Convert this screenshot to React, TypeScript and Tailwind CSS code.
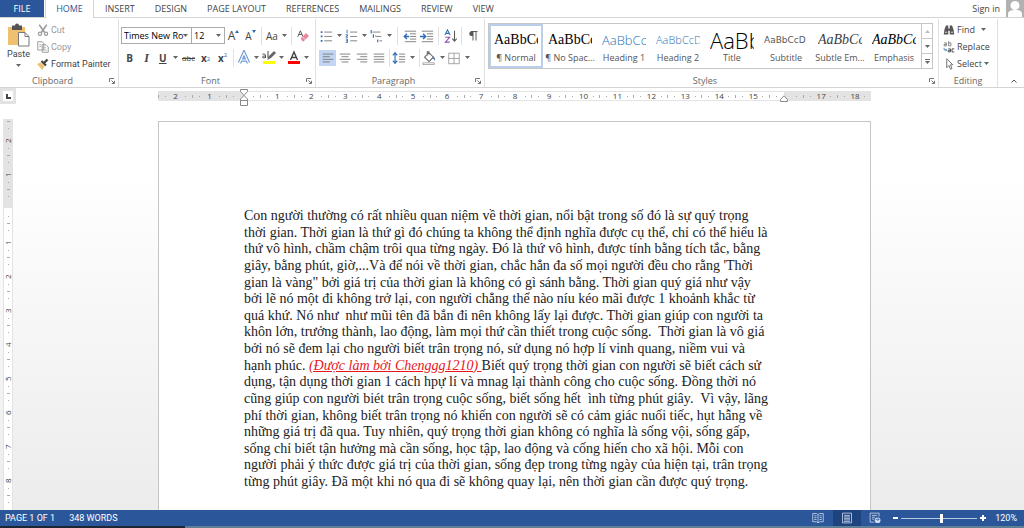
import type { ReactNode } from "react";

const tabs = ["INSERT", "DESIGN", "PAGE LAYOUT", "REFERENCES", "MAILINGS", "REVIEW", "VIEW"];

const styleItems = [
  { name: "¶ Normal", sample: "AaBbCc", look: "font-['Liberation_Serif',serif] text-[14px] text-black" },
  { name: "¶ No Spac...", sample: "AaBbCc", look: "font-['Liberation_Serif',serif] text-[14px] text-black" },
  { name: "Heading 1", sample: "AaBbCc", look: "font-light text-[13px] text-[#2e74b5]" },
  { name: "Heading 2", sample: "AaBbCcD", look: "font-light text-[11px] text-[#2e74b5]" },
  { name: "Title", sample: "AaBb", look: "font-light text-[22px] text-black" },
  { name: "Subtitle", sample: "AaBbCcD", look: "font-['DejaVu_Sans',sans-serif] text-[9px] text-[#5a5a5a]" },
  { name: "Subtle Em...", sample: "AaBbCc", look: "font-['Liberation_Serif',serif] text-[14px] italic text-[#404040]" },
  { name: "Emphasis", sample: "AaBbCc", look: "font-['Liberation_Serif',serif] text-[14px] italic text-black" },
];

const linesBefore = [
  "Con người thường có rất nhiều quan niệm về thời gian, nổi bật trong số đó là sự quý trọng",
  "thời gian. Thời gian là thứ gì đó chúng ta không thể định nghĩa được cụ thể, chỉ có thể hiểu là",
  "thứ vô hình, chầm chậm trôi qua từng ngày. Đó là thứ vô hình, được tính bằng tích tắc, bằng",
  "giây, bằng phút, giờ,...Và để nói về thời gian, chắc hẳn đa số mọi người đều cho rằng 'Thời",
  "gian là vàng\" bởi giá trị của thời gian là không có gì sánh bằng. Thời gian quý giá như vậy",
  "bởi lẽ nó một đi không trở lại, con người chẳng thể nào níu kéo mãi được 1 khoảnh khắc từ",
  "quá khứ. Nó như  như mũi tên đã bắn đi nên không lấy lại được. Thời gian giúp con người ta",
  "khôn lớn, trưởng thành, lao động, làm mọi thứ cần thiết trong cuộc sống.  Thời gian là vô giá",
  "bởi nó sẽ đem lại cho người biết trân trọng nó, sử dụng nó hợp lí vinh quang, niềm vui và",
];

const linesAfter = [
  "dụng, tận dụng thời gian 1 cách hpự lí và mnag lại thành công cho cuộc sống. Đồng thời nó",
  "cũng giúp con người biét trân trọng cuộc sống, biết sống hết  ình từng phút giây.  Vì vậy, lãng",
  "phí thời gian, không biết trân trọng nó khiến con người sẽ có cảm giác nuối tiếc, hụt hẫng về",
  "những giá trị đã qua. Tuy nhiên, quý trọng thời gian không có nghĩa là sống vội, sống gấp,",
  "sống chỉ biết tận hưởng mà cần sống, học tập, lao động và cống hiến cho xã hội. Mỗi con",
  "người phải ý thức được giá trị của thời gian, sống đẹp trong từng ngày của hiện tại, trân trọng",
  "từng phút giây. Đã một khi nó qua đi sẽ không quay lại, nên thời gian cần được quý trọng.",
];

function Icon({ children, className = "size-4" }: { children: ReactNode; className?: string }) {
  return (
    <svg viewBox="0 0 16 16" fill="none" className={`shrink-0 ${className}`} aria-hidden="true">
      {children}
    </svg>
  );
}

function Caret() {
  return (
    <svg viewBox="0 0 5 3" className="h-[3px] w-[5px] shrink-0 fill-[#666]" aria-hidden="true">
      <path d="M0 0h5L2.5 3z" />
    </svg>
  );
}

function Tool({ label, wide, active, children }: { label: string; wide?: boolean; active?: boolean; children: ReactNode }) {
  return (
    <button
      aria-label={label}
      className={`flex h-4 shrink-0 items-center ${wide ? "w-[25px] justify-between pr-[2px]" : "w-[17px] justify-center"} ${active ? "bg-[#c2d5f2]" : ""}`}
    >
      {children}
      {wide && <Caret />}
    </button>
  );
}

function Divider({ roomy }: { roomy?: boolean }) {
  return <span className={`h-[18px] w-px shrink-0 bg-[#e1e1e1] ${roomy ? "mx-[3px]" : "mx-[2px]"}`} />;
}

function Group({ title, launcher, className, children }: { title: string; launcher?: boolean; className: string; children: ReactNode }) {
  return (
    <section aria-label={title} className={`flex flex-col border-r border-[#e1e1e1] ${className}`}>
      <div className="h-14">{children}</div>
      <div className="flex h-3 items-center">
        <span className="flex-1 text-center text-[#666]">{title}</span>
        {launcher && (
          <button aria-label={`${title} settings`} className="mr-[3px] ml-1">
            <svg viewBox="0 0 6 6" fill="none" stroke="#777" className="size-[6px]">
              <path d="M.5 4V.5H5M2.5 2.5l3 3M5.500 2.800V5.500H2.800" />
            </svg>
          </button>
        )}
      </div>
    </section>
  );
}

// text lines of the alignment and list icons
function Rows({ d }: { d: string }) {
  return <path d={d} stroke="#777" />;
}

function ClipboardGroup() {
  return (
    <Group title="Clipboard" launcher className="w-[119px]">
      <div className="flex font-['Roboto',sans-serif]">
        <button className="flex w-[37px] flex-col items-center pt-1">
          <svg viewBox="0 0 24 24" fill="none" className="size-6" aria-hidden="true">
            <path d="M1 4h17v18H1z" fill="#eec06f" />
            <path d="M5 2.500h3a2 2 0 0 1 4 0h3V7H5z" fill="#555" />
            <path d="M11.500 9.500h6.500l4 4v9.500h-10.500z" fill="#fff" stroke="#777" />
            <path d="M18 9.500v4h4" stroke="#777" />
          </svg>
          <span className="mt-px leading-3">Paste</span>
          <span className="mt-1">
            <Caret />
          </span>
        </button>
        <div className="flex flex-col pt-[2px]">
          <button className="flex h-[17px] items-center gap-[2px] text-[#999]">
            <Icon className="size-3">
              <path d="M3 1l7 10M13 1L6 11" stroke="#999" strokeWidth="2" />
              <circle cx="4" cy="13" r="2.200" stroke="#999" strokeWidth="1.500" />
              <circle cx="12" cy="13" r="2.200" stroke="#999" strokeWidth="1.500" />
            </Icon>
            Cut
          </button>
          <button className="flex h-[17px] items-center gap-[2px] text-[#999]">
            <Icon className="size-3">
              <path d="M1 1h6l2 2v9H1zM7 5h5l3 3v7H7z" fill="#fff" stroke="#999" strokeWidth="1.300" />
              <path d="M3 5h3M3 7.500h3M9 9h3M9 12h4" stroke="#999" />
            </Icon>
            Copy
          </button>
          <button className="flex h-[17px] items-center gap-[2px]">
            <Icon className="size-3">
              <path d="M0 8l5-2 5 5-3 5z" fill="#eec06f" />
              <path d="M6 4l6 6M9 7l5-5" stroke="#444" strokeWidth="3" />
            </Icon>
            Format Painter
          </button>
        </div>
      </div>
    </Group>
  );
}

function Combo({ label, value, className }: { label: string; value: string; className: string }) {
  return (
    <span className={`relative flex h-[17px] shrink-0 items-center border border-[#ababab] bg-white ${className}`}>
      <select aria-label={label} className="w-full appearance-none pl-[2px] text-[9px] leading-3 text-black outline-none">
        <option>{value}</option>
      </select>
      <span className="pointer-events-none absolute right-[3px]">
        <Caret />
      </span>
    </span>
  );
}

function FontGroup() {
  return (
    <Group title="Font" launcher className="w-[197px]">
      <div className="flex h-[25px] items-center pt-2 pl-[2px]">
        <Combo label="Font name" value="Times New Ro" className="w-[71px]" />
        <Combo label="Font size" value="12" className="-ml-px w-[34px]" />
        <Tool label="Grow font">
          <span className="text-[12px] leading-4">A</span>
          <svg viewBox="0 0 4 3" className="mb-2 h-[3px] w-1 fill-[#2b6cb5]"><path d="M0 3h4L2 0z" /></svg>
        </Tool>
        <Tool label="Shrink font">
          <span className="text-[10px] leading-4">A</span>
          <svg viewBox="0 0 4 3" className="mb-2 h-[3px] w-1 fill-[#2b6cb5]"><path d="M0 0h4L2 3z" /></svg>
        </Tool>
        <Divider />
        <Tool label="Change case" wide>
          <span className="pl-[2px] text-[10px] leading-4">Aa</span>
        </Tool>
        <Divider />
        <Tool label="Clear formatting">
          <Icon className="size-3">
            <path d="M1 9l3.500-8L8 9M2.500 6h4" stroke="#555" strokeWidth="1.300" />
            <path d="M5 11l7-7 4 4-7 7H7z" fill="#e8869a" />
            <path d="M7 9l4 4" stroke="#fff" />
          </Icon>
        </Tool>
      </div>
      <div className="flex h-[23px] items-center pt-1 pl-[2px]">
        <Tool label="Bold"><b className="text-[10px] leading-4">B</b></Tool>
        <Tool label="Italic"><i className="font-['Liberation_Serif',serif] text-[12px] leading-4 font-bold">I</i></Tool>
        <Tool label="Underline" wide><b className="pl-1 text-[10px] leading-4 underline">U</b></Tool>
        <Tool label="Strikethrough"><span className="text-[8px] leading-4 line-through">abc</span></Tool>
        <Tool label="Subscript">
          <b className="text-[10px] leading-4">x</b>
          <sub className="text-[6px] leading-none text-[#2b6cb5]">2</sub>
        </Tool>
        <Tool label="Superscript">
          <b className="text-[10px] leading-4">x</b>
          <sup className="text-[6px] leading-none text-[#2b6cb5]">2</sup>
        </Tool>
        <Divider />
        <Tool label="Text effects" wide>
          <Icon className="size-4">
            <path d="M3.500 13L8 3l4.500 10M5 10h6" stroke="#6d9bd8" strokeWidth="3.500" />
            <path d="M3.500 13L8 3l4.500 10M5 10h6" stroke="#fff" strokeWidth="1.200" />
          </Icon>
        </Tool>
        <Tool label="Highlight colour" wide>
          <Icon className="size-4">
            <path d="M2 11h12v3H2z" fill="#ffff00" />
            <path d="M6 10l2-4 5-5 2 2-5 5z" fill="#666" />
            <path d="M1.500 4.500c2-1.500 3 0 3 1.500v2M4.500 6c-4-.5-4 3 0 1.500M7 1v7" stroke="#444" />
          </Icon>
        </Tool>
        <Tool label="Font colour" wide>
          <Icon className="size-4">
            <path d="M2 11h12v3H2z" fill="#f00" />
            <path d="M4.500 10L8 2l3.500 8M5.500 7.500h5" stroke="#444" strokeWidth="1.400" />
          </Icon>
        </Tool>
      </div>
    </Group>
  );
}

function ParagraphGroup() {
  return (
    <Group title="Paragraph" launcher className="w-[169px]">
      <div className="flex h-[25px] items-center pt-2 pl-[3px]">
        <Tool label="Bullets" wide>
          <Icon className="size-3.5">
            <path d="M2 3.500h2M2 8.500h2M2 13.500h2" stroke="#2b6cb5" strokeWidth="2" />
            <Rows d="M6 3.500h9M6 8.500h9M6 13.500h9" />
          </Icon>
        </Tool>
        <Tool label="Numbering" wide>
          <Icon className="size-3.5">
            <path d="M3.500 1v4M2 6.500h2v1.500H2.500v1.500H4.500M2 11.500h2v4H2M2 13.500h2" stroke="#2b6cb5" />
            <Rows d="M7 3.500h8M7 8.500h8M7 13.500h8" />
          </Icon>
        </Tool>
        <Tool label="Multilevel list" wide>
          <Icon className="size-3.5">
            <path d="M2.500 1v4M5 6v4M7 8h1M10 12v3" stroke="#2b6cb5" strokeWidth="1.300" />
            <Rows d="M4 3.500h9M8 8.500h6M12 13.500h3" />
          </Icon>
        </Tool>
        <Divider roomy />
        <Tool label="Decrease indent">
          <Icon className="size-3.5">
            <Rows d="M2 2.500h13M8 5.500h7M8 8.500h7M8 11.500h7M2 14.500h13" />
            <path d="M7 8.500H2M4.500 5.500l-3 3 3 3" stroke="#2b6cb5" strokeWidth="1.600" />
          </Icon>
        </Tool>
        <Tool label="Increase indent">
          <Icon className="size-3.5">
            <Rows d="M2 2.500h13M8 5.500h7M8 8.500h7M8 11.500h7M2 14.500h13" />
            <path d="M0 8.500h6M3.500 5.500l3 3-3 3" stroke="#2b6cb5" strokeWidth="1.600" />
          </Icon>
        </Tool>
        <Divider roomy />
        <Tool label="Sort">
          <Icon className="size-3.5">
            <path d="M1 7l3-6 3 6M2 5h4" stroke="#2b6cb5" strokeWidth="1.200" />
            <path d="M1.500 9.500h5l-5 5.500h5" stroke="#8a4fa8" strokeWidth="1.200" />
            <path d="M12 2v12M9.500 11l2.500 3 2.500-3" stroke="#555" strokeWidth="1.200" />
          </Icon>
        </Tool>
        <Divider />
        <Tool label="Show marks">
          <Icon className="size-3">
            <path d="M8 2v12M12 2v12M5 2h9" stroke="#555" strokeWidth="1.300" />
            <path d="M8 2H6a3 3 0 0 0 0 6h2z" fill="#555" />
          </Icon>
        </Tool>
      </div>
      <div className="flex h-[23px] items-center pt-1 pl-[3px]">
        <Tool label="Align left" active><Icon className="size-3.5"><Rows d="M2 3.500h12M2 6.500h8M2 9.500h12M2 12.500h8" /></Icon></Tool>
        <Tool label="Centre"><Icon className="size-3.5"><Rows d="M2 3.500h12M4 6.500h8M2 9.500h12M4 12.500h8" /></Icon></Tool>
        <Tool label="Align right"><Icon className="size-3.5"><Rows d="M2 3.500h12M6 6.500h8M2 9.500h12M6 12.500h8" /></Icon></Tool>
        <Tool label="Justify"><Icon className="size-3.5"><Rows d="M2 3.500h12M2 6.500h12M2 9.500h12M2 12.500h12" /></Icon></Tool>
        <Divider />
        <Tool label="Line spacing" wide>
          <Icon className="size-3.5">
            <path d="M3.500 2v12M1 5l2.500-3L6 5M1 11l2.500 3L6 11" stroke="#2b6cb5" strokeWidth="1.300" />
            <Rows d="M8 3.500h7M8 6.500h7M8 9.500h7M8 12.500h7" />
          </Icon>
        </Tool>
        <Divider />
        <Tool label="Shading" wide>
          <Icon className="size-3.5">
            <path d="M3 7l5-5 5 5-5 5zM6 5V1h2v3" stroke="#666" strokeWidth="1.200" />
            <path d="M13 6c2 2 2 3 1.500 5L12.500 8z" fill="#2b6cb5" />
            <path d="M1 13.500h13v2H1z" fill="#fff" stroke="#888" strokeWidth=".8" />
          </Icon>
        </Tool>
        <Tool label="Borders" wide>
          <Icon className="size-3.5">
            <path d="M2 2.500h12v12H2zM8 2.500v12M2 8.500h12" stroke="#999" />
          </Icon>
        </Tool>
      </div>
    </Group>
  );
}

function StylesGroup() {
  return (
    <Group title="Styles" launcher className="min-w-0 flex-1">
      <div className="mt-1 mr-[5px] ml-[3px] flex h-[46px] border border-[#c6c6c6]">
        {styleItems.map((item, i) => (
          <button
            key={item.name}
            className={`flex min-w-0 flex-1 flex-col items-center justify-center border-2 ${i === 0 ? "border-[#bccfea]" : "border-transparent"}`}
          >
            <span className={`flex h-6 w-[44px] items-center overflow-hidden whitespace-nowrap ${item.look}`}>
              {item.sample}
            </span>
            <span className="h-3 whitespace-nowrap text-[#555]">{item.name}</span>
          </button>
        ))}
        <div className="flex w-[11px] flex-col divide-y divide-[#c6c6c6] border-l border-[#c6c6c6]">
          <button aria-label="Previous styles" className="flex flex-1 items-center justify-center">
            <svg viewBox="0 0 5 3" className="h-[3px] w-[5px] fill-[#bbb]"><path d="M0 3h5L2.5 0z" /></svg>
          </button>
          <button aria-label="Next styles" className="flex flex-1 items-center justify-center"><Caret /></button>
          <button aria-label="More styles" className="flex flex-1 flex-col items-center justify-center gap-px">
            <span className="h-px w-[5px] bg-[#666]" />
            <Caret />
          </button>
        </div>
      </div>
    </Group>
  );
}

function EditingGroup() {
  return (
    <Group title="Editing" className="w-[59px]">
      <div className="flex flex-col items-start pt-[2px] pl-1">
        <button className="flex h-[17px] items-center gap-[2px]">
          <Icon className="size-3">
            <path d="M1 14l1-7 2-5h3v12zM9 14V2h3l2 5 1 7z" fill="#555" />
            <path d="M6 6h4v3H6z" fill="#555" />
            <path d="M2.500 11h3M10.500 11h3" stroke="#fff" />
          </Icon>
          Find
          <span className="ml-1"><Caret /></span>
        </button>
        <button className="flex h-[17px] items-center gap-[2px]">
          <Icon className="size-3">
            <path d="M1.500 2.500h3v4h-3v-2h3M7.500 0v6.500h3v-4h-3" stroke="#666" />
            <path d="M7 10.500h3v4H7v-2h3M15 10.500h-3v4h3" stroke="#444" strokeWidth="1.200" />
            <path d="M1.500 9v3H5M3.500 10.500L5 12l-1.500 1.500" stroke="#2b6cb5" />
          </Icon>
          Replace
        </button>
        <button className="flex h-[17px] items-center gap-[2px]">
          <Icon className="size-3">
            <path d="M5 1v12l3-3 2 5 2-1-2-5h3z" fill="#fff" stroke="#666" strokeWidth="1.200" />
          </Icon>
          Select
          <Caret />
        </button>
      </div>
    </Group>
  );
}

function HorizontalRuler() {
  const marks = Array.from({ length: 21 }, (_, i) => i - 2);
  return (
    <div className="relative flex h-[10px] w-[713px] items-center overflow-visible border-y border-[#e3e3e3] bg-[linear-gradient(to_right,#e3e3e3_86px,white_86px,white_626px,#e3e3e3_626px)] text-[8px] text-[#444]">
      {marks.map((n) => (
        <span key={n} className="flex h-full min-w-0 flex-1 items-center justify-between">
          <i className="h-[3px] w-px bg-[#aaa]" />
          <i className="size-px bg-[#aaa]" />
          <span className="w-2 text-center leading-none whitespace-nowrap">{n === 0 || n === 16 ? "" : Math.abs(n)}</span>
          <i className="size-px bg-[#aaa]" />
          <i className="w-0" />
        </span>
      ))}
      <svg viewBox="0 0 8 17" fill="#fff" stroke="#888" className="absolute -top-[3px] left-[82px] h-[17px] w-2" aria-hidden="true">
        <path d="M.5.5h7v2L4 6.500.5 2.500zM4 6.500l3.500 3.500v1.500h-7V10zM.5 11.500h7v5h-7z" />
      </svg>
      <svg viewBox="0 0 8 8" fill="#fff" stroke="#888" className="absolute top-[3px] left-[622px] size-2" aria-hidden="true">
        <path d="M4 .8L7.500 4.500v2h-7v-2z" />
      </svg>
    </div>
  );
}

function VerticalRuler() {
  const marks = Array.from({ length: 12 }, (_, i) => i - 2);
  return (
    <div className="ml-[3px] min-h-0 w-[10px] flex-1 overflow-hidden border-x border-[#e3e3e3] bg-[linear-gradient(to_bottom,#e3e3e3_89px,white_89px)] pt-[2px] text-[8px] text-[#444]">
      {marks.map((n) => (
        <span key={n} className="flex h-[34px] flex-col items-center justify-between">
          <i className="h-px w-[3px] bg-[#aaa]" />
          <i className="size-px bg-[#aaa]" />
          <span className="flex h-2 rotate-180 items-center leading-none [writing-mode:vertical-rl]">{n === 0 ? "" : Math.abs(n)}</span>
          <i className="size-px bg-[#aaa]" />
          <i className="h-0" />
        </span>
      ))}
    </div>
  );
}

function StatusBar() {
  return (
    <footer className="flex h-4 shrink-0 items-center bg-[#2b579a] pr-[7px] pl-[5px] font-['Roboto',sans-serif] text-white">
      <span>PAGE 1 OF 1</span>
      <span className="ml-[14px]">348 WORDS</span>
      <button aria-label="Read mode" className="ml-auto flex h-4 w-[30px] items-center justify-center">
        <Icon className="size-3">
          <path d="M1 2h5l2 1.500L10 2h5v11h-5l-2 1.500L6 13H1zM8 3.500v11M3 5h3M3 7.500h3M3 10h3M10 5h3M10 7.500h3M10 10h3" stroke="#d5e0f2" />
        </Icon>
      </button>
      <button aria-label="Print layout" className="flex h-4 w-[28px] items-center justify-center bg-[#1e4480]">
        <Icon className="size-3">
          <path d="M2 1.500h12v13H2zM4 4.500h8M4 6.500h8M4 8.500h8M4 10.500h8M4 12.500h8" stroke="#d5e0f2" />
        </Icon>
      </button>
      <button aria-label="Web layout" className="flex h-4 w-[28px] items-center justify-center">
        <Icon className="size-3">
          <path d="M7 13.500H1.500v-12h12V6M4 4.500h7M4 7h4M4 9.500h3" stroke="#d5e0f2" />
          <circle cx="11.500" cy="11" r="3.800" fill="#d5e0f2" />
          <path d="M9 10h2l1 2M12 8v2h2" stroke="#2b579a" />
        </Icon>
      </button>
      <button aria-label="Zoom out" className="flex size-3 items-center justify-center">
        <span className="h-[2px] w-[5px] bg-white" />
      </button>
      <input
        type="range"
        aria-label="Zoom"
        min={0}
        max={100}
        defaultValue={53}
        className="h-3 w-[76px] appearance-none bg-[linear-gradient(#b8c9e4,#b8c9e4)] bg-[length:100%_1px] bg-center bg-no-repeat [&::-webkit-slider-thumb]:h-[9px] [&::-webkit-slider-thumb]:w-[3px] [&::-webkit-slider-thumb]:appearance-none [&::-webkit-slider-thumb]:bg-white"
      />
      <button aria-label="Zoom in" className="flex size-3 items-center justify-center">
        <svg viewBox="0 0 6 6" stroke="#fff" strokeWidth="2" className="size-[6px]"><path d="M0 3h6M3 0v6" /></svg>
      </button>
      <span className="w-[28px] text-right">120%</span>
    </footer>
  );
}

export default function App() {
  return (
    <div className="flex h-screen flex-col overflow-hidden bg-white font-['Open_Sans','Noto_Sans',sans-serif] text-[9px] leading-3 text-[#444]">
      <header className="flex h-[18px] shrink-0 items-stretch border-b border-[#d4d4d4]">
        <button className="w-11 bg-[#2b579a] text-white">FILE</button>
        <button className="-mb-px ml-px w-[49px] border-x border-[#d4d4d4] bg-white text-[#2b579a]">HOME</button>
        <nav className="flex gap-5 pl-[11px]">
          {tabs.map((tab) => (
            <button key={tab}>{tab}</button>
          ))}
        </nav>
        <a href="#signin" className="ml-auto flex items-center">Sign in</a>
        <span className="ml-[6px] flex w-[18px] justify-center bg-[#b1b1b1]">
          <svg viewBox="0 0 18 17" fill="#fff" className="h-[17px] w-[18px]" aria-hidden="true">
            <circle cx="9" cy="5.500" r="4.500" />
            <path d="M2 17v-3c0-3 3-4 7-4s7 1 7 4v3z" />
          </svg>
        </span>
      </header>

      <div className="flex h-[70px] shrink-0 border-b border-[#d4d4d4] bg-white">
        <div className="flex min-w-0 flex-1 items-stretch pt-px">
          <ClipboardGroup />
          <FontGroup />
          <ParagraphGroup />
          <StylesGroup />
          <EditingGroup />
        </div>
        <button aria-label="Collapse ribbon" className="flex w-[26px] items-end justify-center pb-1 pl-[6px]">
          <svg viewBox="0 0 6 4" fill="none" stroke="#555" className="h-1 w-[6px]"><path d="M.5 3.500L3 1l2.500 2.500" /></svg>
        </button>
      </div>

      <div className="flex min-h-0 flex-1 bg-linear-to-b from-white from-20% to-[#ececec]">
        <div className="flex w-6 shrink-0 flex-col">
          <button aria-label="Tab stop" className="mb-[15px] size-4 shrink-0 border-3 border-[#e3e3e3] bg-white">
            <svg viewBox="0 0 10 10" fill="none" stroke="#444" strokeWidth="2" className="size-[10px]"><path d="M4 3v4h4" /></svg>
          </button>
          <VerticalRuler />
        </div>
        <main className="flex min-w-0 flex-1 flex-col items-center pt-[3px] pr-[19px]">
          <HorizontalRuler />
          <article className="mt-5 w-[713px] flex-1 border border-b-0 border-[#c6c6c6] bg-white px-[85px] pt-[86px]">
            <p className="flex h-[282px] flex-col justify-between font-['Liberation_Serif',serif] text-[14px] leading-4 whitespace-pre text-[#222]">
              {linesBefore.map((line) => (
                <span key={line}>{line}</span>
              ))}
              <span>
                hạnh phúc. <em className="text-[#e8141c] underline">(Được làm bởi Chenggg1210) </em>Biết quý trọng thời gian con người sẽ biết cách sử
              </span>
              {linesAfter.map((line) => (
                <span key={line}>{line}</span>
              ))}
            </p>
          </article>
        </main>
      </div>

      <StatusBar />
      <div className="h-[2px] shrink-0 bg-[linear-gradient(to_right,#1d2733_185px,#5f7f96_185px)]" />
    </div>
  );
}
